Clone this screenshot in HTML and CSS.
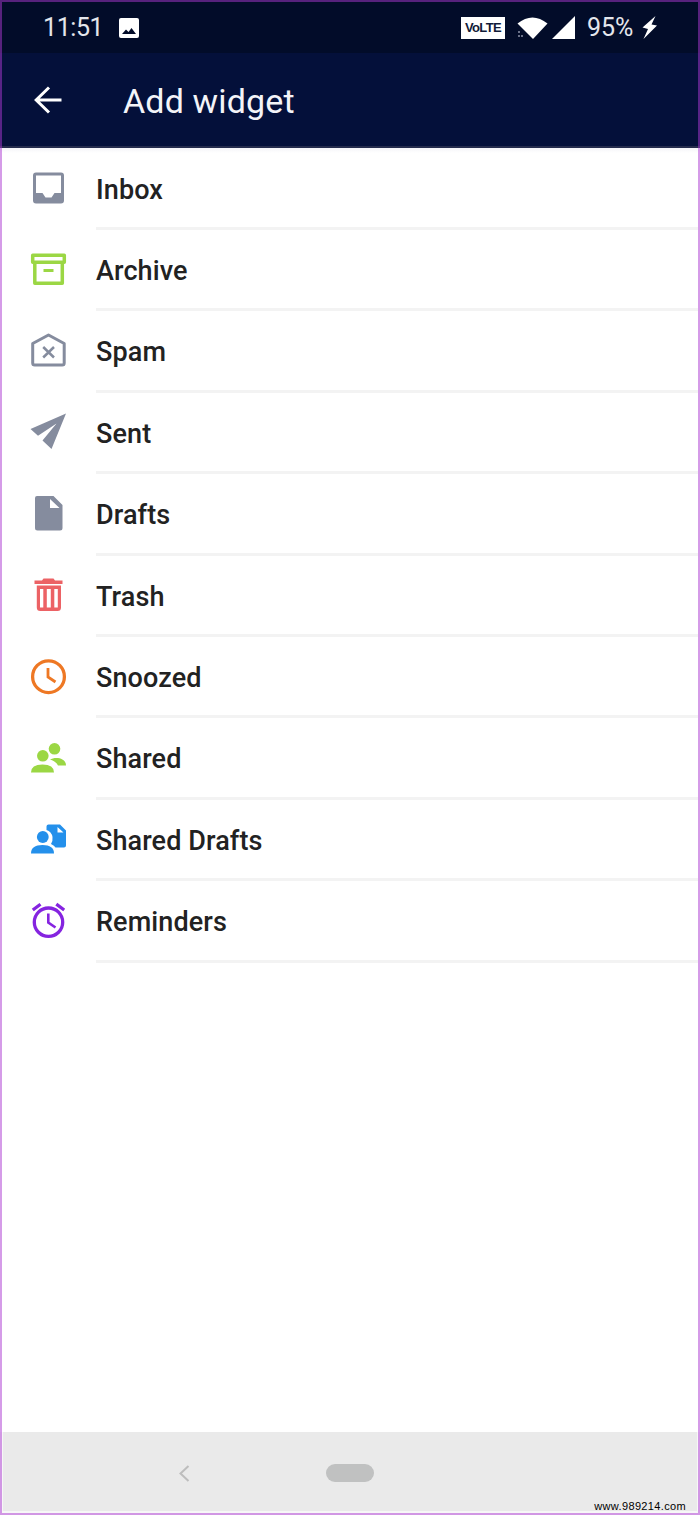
FILE: index.html
```html
<!DOCTYPE html>
<html lang="en">
<head>
<meta charset="utf-8">
<title>Add widget</title>
<link rel="stylesheet" href="styles.css">
</head>
<body>
<div class="screen">
  <div class="status">
    <span class="clock">11:51</span>
    <svg class="picture" width="20" height="20" viewBox="0 0 20 20"><path fill="#fff" fill-rule="evenodd" d="M2 0H18Q20 0 20 2V18Q20 20 18 20H2Q0 20 0 18V2Q0 0 2 0ZM3 16H17L12.500 10L9.500 14L7 11.500Z"/></svg>
    <span class="volte">VoLTE</span>
    <svg class="wifi" width="31" height="22" viewBox="0 0 31 22"><path fill="#fff" d="M0.500 6.500Q15.500-5.500 30.500 6.500L16 22Z"/><path stroke="#8d93a8" stroke-width="1.500" d="M2 14v2M2 18v2M5 18v2"/></svg>
    <svg class="signal" width="23" height="23" viewBox="0 0 23 23"><path fill="#fff" d="M23 0V23H0Z"/></svg>
    <span class="battery">95%</span>
    <svg class="bolt" width="15" height="23" viewBox="0 0 15 23"><path fill="#fff" d="M13.500 0L0.500 11.500L6 13L1.500 23L15 9.500L9.500 8.500Z"/></svg>
  </div>
  <header class="appbar">
    <svg class="back" width="28" height="28" viewBox="0 0 28 28"><path fill="none" stroke="#fff" stroke-width="3" d="M27.500 14H2M15 1.500L2.200 14L15 26.500"/></svg>
    <h1 class="title">Add widget</h1>
  </header>
  <ul class="list">
    <li class="row"><svg class="icon gray" viewBox="0 0 40 40"><path fill="currentColor" fill-rule="evenodd" d="M8 4.500H33Q36 4.500 36 7.500V32.500Q36 35.500 33 35.500H8Q5 35.500 5 32.500V7.500Q5 4.500 8 4.500ZM8 7.500V25H14.500L17.500 29.500H23.500L26.500 25H33V7.500Z"/></svg><span class="label">Inbox</span></li>
    <li class="row"><svg class="icon lime" viewBox="0 0 40 40"><g fill="none" stroke="currentColor" stroke-width="3.500" stroke-linejoin="round"><path d="M4.700 5.300H36.300V12.300H4.700ZM6.800 12.500V33.300H34.300V12.500"/><path d="M15.500 20.500H25.500" stroke-width="3"/></g></svg><span class="label">Archive</span></li>
    <li class="row"><svg class="icon gray" viewBox="0 0 40 40"><g fill="none" stroke="currentColor" stroke-width="3"><path stroke-linejoin="round" d="M4.700 12.500L20.500 4L36.200 12.500V32Q36.200 34 34.200 34H6.700Q4.700 34 4.700 32Z"/><path stroke-width="2.500" d="M15.200 16L26 26.500M26 16L15.200 26.500"/></g></svg><span class="label">Spam</span></li>
    <li class="row"><svg class="icon gray" viewBox="0 0 40 40"><path fill="currentColor" d="M38 1.500L2.500 17L10 23.700L28.500 11.500L14.500 28.500L23.500 37Z"/></svg><span class="label">Sent</span></li>
    <li class="row"><svg class="icon gray" viewBox="0 0 40 40"><path fill="currentColor" fill-rule="evenodd" d="M9 2H25.500L34.500 11V34Q34.500 36.500 32 36.500H9.500Q7 36.500 7 34V4Q7 2 9 2ZM22 5V14H31.500Z"/></svg><span class="label">Drafts</span></li>
    <li class="row"><svg class="icon red" viewBox="0 0 40 40"><path fill="currentColor" fill-rule="evenodd" d="M15.500 3.500H25.500L27 5.500H34.500V9H6.500V5.500H14ZM8.800 10.500H33V32.500Q33 36 29.500 36H12.300Q8.800 36 8.800 32.500ZM12 14V32.500H15.300V14ZM18.800 14V32.500H22.800V14ZM26.300 14V32.500H29.800V14Z"/></svg><span class="label">Trash</span></li>
    <li class="row"><svg class="icon orange" viewBox="0 0 40 40"><g fill="none" stroke="currentColor" stroke-width="3.300"><circle cx="20.500" cy="19.700" r="15.900"/><path stroke-width="2.800" d="M20 11V20L27.500 25"/></g></svg><span class="label">Snoozed</span></li>
    <li class="row"><svg class="icon lime" viewBox="0 0 40 40"><g fill="currentColor"><circle cx="26.500" cy="10.800" r="5.800"/><circle cx="14.800" cy="17.800" r="5.800"/><path d="M3 34.500Q3 26.500 14.500 26.500Q26 26.500 26 34.500ZM22 21.500C27 18.500 38 19.500 38 27.500H30C28.500 24.500 25.500 22.500 22 21.500Z"/></g></svg><span class="label">Shared</span></li>
    <li class="row"><svg class="icon blue" viewBox="0 0 40 40"><path fill="currentColor" fill-rule="evenodd" d="M20.500 5.500H32L38 11.500V26.500Q38 28.500 36 28.500H27.500Q26.500 26.500 23 25Q25 22 24.500 18Q23.500 12.500 18.500 11V7.500Q18.500 5.500 20.500 5.500ZM29.500 8V13.500H35.500Z"/><circle cx="14.800" cy="18" r="5.900" fill="currentColor"/><path fill="currentColor" d="M3 34.500Q3 26 14.500 26Q26 26 26 34.500Z"/></svg><span class="label">Shared Drafts</span></li>
    <li class="row"><svg class="icon purple" viewBox="0 0 40 40"><g fill="none" stroke="currentColor" stroke-width="3.300"><circle cx="20.500" cy="21.200" r="14.200"/><path stroke-width="2.600" d="M20.300 12.500V21.500L27.500 26.500"/><path d="M4.800 9L12.500 3.200M28.300 3.200L36.200 9"/></g></svg><span class="label">Reminders</span></li>
  </ul>
  <nav class="navbar">
    <svg class="navback" width="11" height="17" viewBox="0 0 11 17"><path fill="none" stroke="#bdbdbd" stroke-width="2" d="M9.500 1L1.500 8.500L9.500 16"/></svg>
    <span class="pill"></span>
    <span class="site">www.989214.com</span>
  </nav>
</div>
</body>
</html>
```
FILE: styles.css
```css
* { box-sizing: border-box; }
body { margin: 0; background: #fff; font-family: Roboto, "Liberation Sans", sans-serif; }
.screen { position: relative; width: 700px; height: 1515px; display: flex; flex-direction: column; overflow: hidden; }
.screen::after { content: ""; position: absolute; inset: 0; border: 2px solid rgba(172, 55, 210, .5); pointer-events: none; }
.status { height: 53px; flex: none; display: flex; align-items: center; background: #020c29; color: #e4e6ec; padding: 2px 43px 0 43px; font-size: 25px; }
.clock { width: 60px; white-space: nowrap; letter-spacing: -.4px; }
.picture { margin-left: 16px; }
.volte { margin-left: auto; width: 44px; height: 22px; background: #fff; color: #111a38; font: bold 13px/22px "Liberation Sans", sans-serif; text-align: center; letter-spacing: -.6px; }
.wifi { margin-left: 12px; }
.signal { margin-left: 4px; }
.battery { margin-left: 12px; width: 48px; white-space: nowrap; }
.bolt { margin-left: 7px; }
.appbar { height: 95px; flex: none; display: flex; align-items: center; background: #04103a; padding: 0 35px 0 34px; border-bottom: 2px solid #252c4d; }
.back { margin-right: 61px; }
.title { margin: 3px 0 0; color: #f3f4f8; font-weight: 400; font-size: 34px; line-height: 40px; letter-spacing: .15px; white-space: nowrap; }
.list { margin: 0; padding: .7px 0 0; list-style: none; flex: 1; background: linear-gradient(#f4f4f8, #fff 5px); }
.row { height: 81.4px; display: flex; align-items: stretch; padding: 0 2px 0 28px; }
.icon { width: 40px; height: 40px; flex: none; margin: 19.5px 28px 0 0; }
.label { flex: 1; border-bottom: 3px solid #f3f3f3; color: #222; font-weight: 500; font-size: 27px; line-height: 82px; letter-spacing: .1px; white-space: nowrap; }
.gray { color: #858c9e; }
.lime { color: #9bd744; }
.red { color: #ec6265; }
.orange { color: #ee7824; }
.blue { color: #2490eb; }
.purple { color: #8524e0; }
.navbar { height: 83px; flex: none; display: flex; align-items: center; background: #eaeaea; border: solid #f7f7f7; border-width: 0 3px 4px; padding: 3px 11px 0 176px; }
.navback { margin-right: 136px; }
.pill { width: 48px; height: 18px; border-radius: 9px; background: #c0c1c1; }
.site { margin: 0 0 -2px auto; align-self: flex-end; color: #000; font: 11px/14px "Liberation Sans", sans-serif; letter-spacing: .35px; }
```
